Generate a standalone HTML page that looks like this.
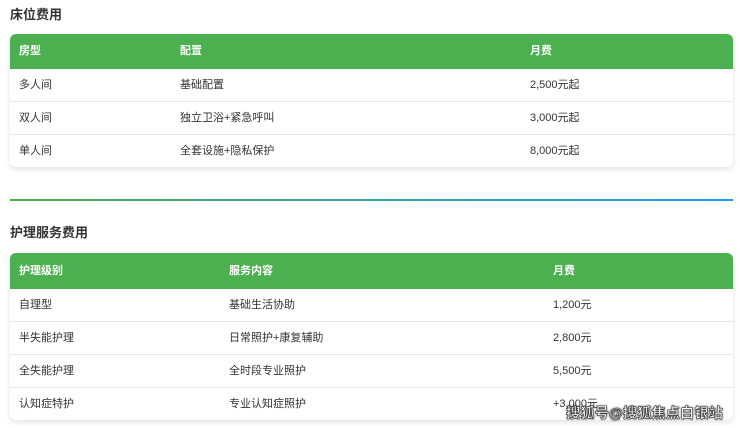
<!DOCTYPE html>
<html><head><meta charset="utf-8"><style>
body{margin:0;width:740px;height:428px;background:#fff;font-family:"Liberation Sans","Noto Sans CJK SC",sans-serif;position:relative;overflow:hidden;color:#333}
h3{position:absolute;left:10px;margin:0;font-size:13px;font-weight:bold;color:#333}
.t{position:absolute;left:10px;width:723px;border-radius:6px;box-shadow:0 2px 6px rgba(0,0,0,0.12);overflow:hidden;background:#fff}
.r{position:relative;height:32px;border-bottom:1px solid #e6e6e6;font-size:11px;line-height:32px}
.r:last-child{border-bottom:none}
.h{background:#4caf50;color:#fff;font-weight:bold;height:35px;line-height:35px;border:none}
.t2 .h{height:36px;line-height:36px}
.r span{position:absolute;top:0}
.line{position:absolute;left:10px;top:199px;width:723px;height:2px;background:linear-gradient(90deg,#4caf50,#2196f3)}
.wm{position:absolute;left:566px;top:402px;font-size:14.3px;font-weight:bold;color:#fff;-webkit-text-stroke:0.6px #333;text-shadow:0 0 2px #000;white-space:nowrap}
</style></head><body>
<h3 style="top:4px">床位费用</h3>
<div class="t" style="top:34px">
<div class="r h"><span style="left:9px">房型</span><span style="left:170px">配置</span><span style="left:520px">月费</span></div>
<div class="r"><span style="left:9px">多人间</span><span style="left:170px">基础配置</span><span style="left:520px">2,500元起</span></div>
<div class="r"><span style="left:9px">双人间</span><span style="left:170px">独立卫浴+紧急呼叫</span><span style="left:520px">3,000元起</span></div>
<div class="r"><span style="left:9px">单人间</span><span style="left:170px">全套设施+隐私保护</span><span style="left:520px">8,000元起</span></div>
</div>
<div class="line"></div>
<h3 style="top:222px">护理服务费用</h3>
<div class="t t2" style="top:253px">
<div class="r h"><span style="left:9px">护理级别</span><span style="left:219px">服务内容</span><span style="left:543px">月费</span></div>
<div class="r"><span style="left:9px">自理型</span><span style="left:219px">基础生活协助</span><span style="left:543px">1,200元</span></div>
<div class="r"><span style="left:9px">半失能护理</span><span style="left:219px">日常照护+康复辅助</span><span style="left:543px">2,800元</span></div>
<div class="r"><span style="left:9px">全失能护理</span><span style="left:219px">全时段专业照护</span><span style="left:543px">5,500元</span></div>
<div class="r"><span style="left:9px">认知症特护</span><span style="left:219px">专业认知症照护</span><span style="left:543px">+3,000元</span></div>
</div>
<div class="wm">搜狐号@搜狐焦点白银站</div>
</body></html>
